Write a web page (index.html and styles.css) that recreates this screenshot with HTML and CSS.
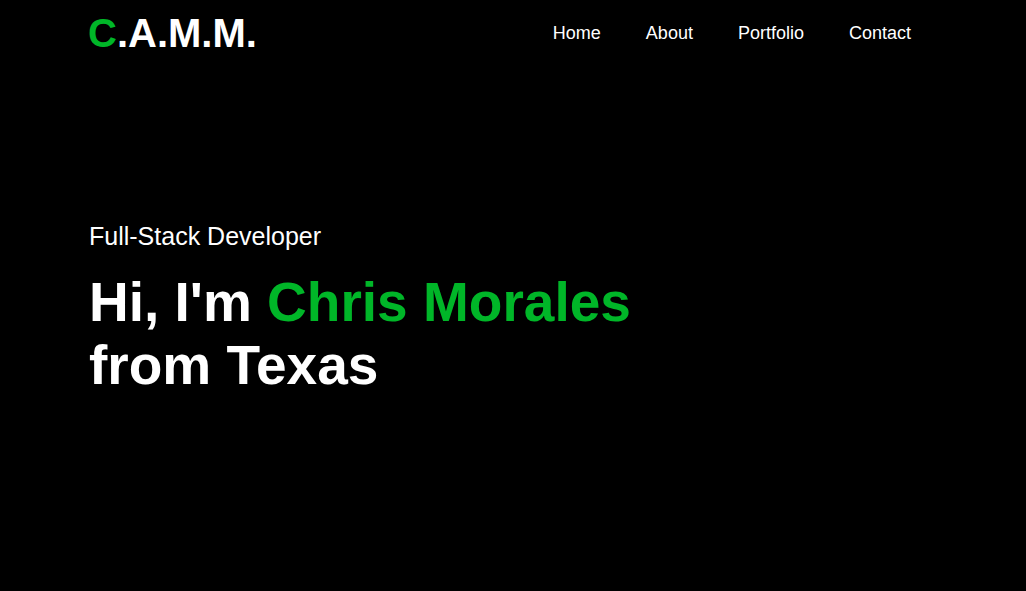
FILE: index.html
```html
<!DOCTYPE html>
<html lang="en">
<head>
<meta charset="utf-8">
<title>C.A.M.M.</title>
<link rel="stylesheet" href="styles.css">
</head>
<body>
<header class="header">
  <a class="logo" href="#"><span class="accent">C</span>.A.M.M.</a>
  <nav class="nav">
    <a href="#">Home</a>
    <a href="#">About</a>
    <a href="#">Portfolio</a>
    <a href="#">Contact</a>
  </nav>
</header>
<main class="hero">
  <p class="role">Full-Stack Developer</p>
  <h1 class="title">Hi, I'm <span class="accent">Chris Morales</span><br>from Texas</h1>
</main>
</body>
</html>
```
FILE: styles.css
```css
* { box-sizing: border-box; }
html, body {
  margin: 0;
  padding: 0;
  background: #000;
  color: #fff;
  font-family: "Liberation Sans", Arial, sans-serif;
  height: 100%;
}
.accent { color: #00b628; }
.header {
  display: flex;
  align-items: center;
  justify-content: space-between;
  padding: 6px 115px 0 88px;
  height: 60px;
}
.logo {
  color: #fff;
  text-decoration: none;
  font-weight: 700;
  font-size: 40px;
}
.nav {
  display: flex;
  gap: 45px;
}
.nav a {
  color: #fff;
  text-decoration: none;
  font-size: 18px;
}
.hero {
  padding: 162px 0 0 89px;
}
.role {
  margin: 0 0 20px;
  font-size: 25px;
}
.title {
  margin: 0;
  font-size: 55px;
  font-weight: 700;
  line-height: 63px;
}
```
